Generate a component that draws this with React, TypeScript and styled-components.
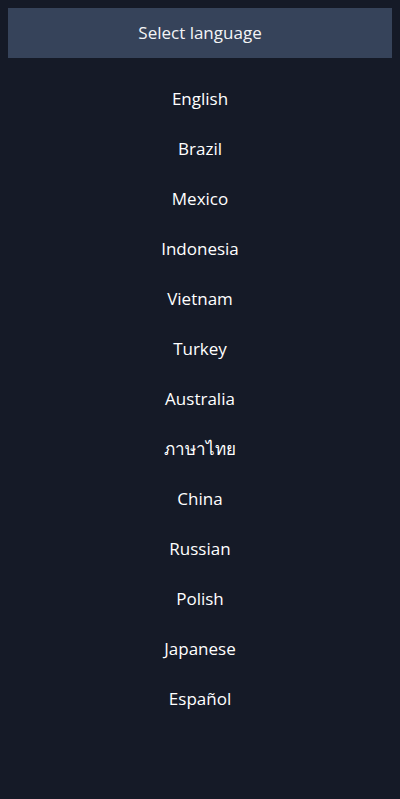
import React from "react";
import styled, { createGlobalStyle } from "styled-components";

const GlobalStyle = createGlobalStyle`
  html, body {
    background: #151a27;
    min-height: 100%;
  }
  body {
    margin: 8px;
    font-family: "Open Sans", "Noto Sans", "DejaVu Sans", sans-serif;
    color: #ffffff;
  }
`;

const Root = styled.div`
  display: flex;
  flex-direction: column;
`;

const Header = styled.div`
  height: 50px;
  box-sizing: border-box;
  padding-bottom: 2px;
  background: #36435a;
  display: flex;
  align-items: center;
  justify-content: center;
  font-size: 17px;
  color: #f3f4f6;
`;

const List = styled.ul`
  list-style: none;
  margin: 16px 0 0;
  padding: 0;
  display: flex;
  flex-direction: column;
`;

const Item = styled.li`
  height: 50px;
  box-sizing: border-box;
  padding-bottom: 2px;
  display: flex;
  align-items: center;
  justify-content: center;
  font-size: 17px;
  cursor: pointer;
`;

const languages = [
  "English",
  "Brazil",
  "Mexico",
  "Indonesia",
  "Vietnam",
  "Turkey",
  "Australia",
  "ภาษาไทย",
  "China",
  "Russian",
  "Polish",
  "Japanese",
  "Español",
];

const App = () => (
  <Root>
    <GlobalStyle />
    <Header>Select language</Header>
    <List>
      {languages.map((lang) => (
        <Item key={lang}>{lang}</Item>
      ))}
    </List>
  </Root>
);

export default App;
